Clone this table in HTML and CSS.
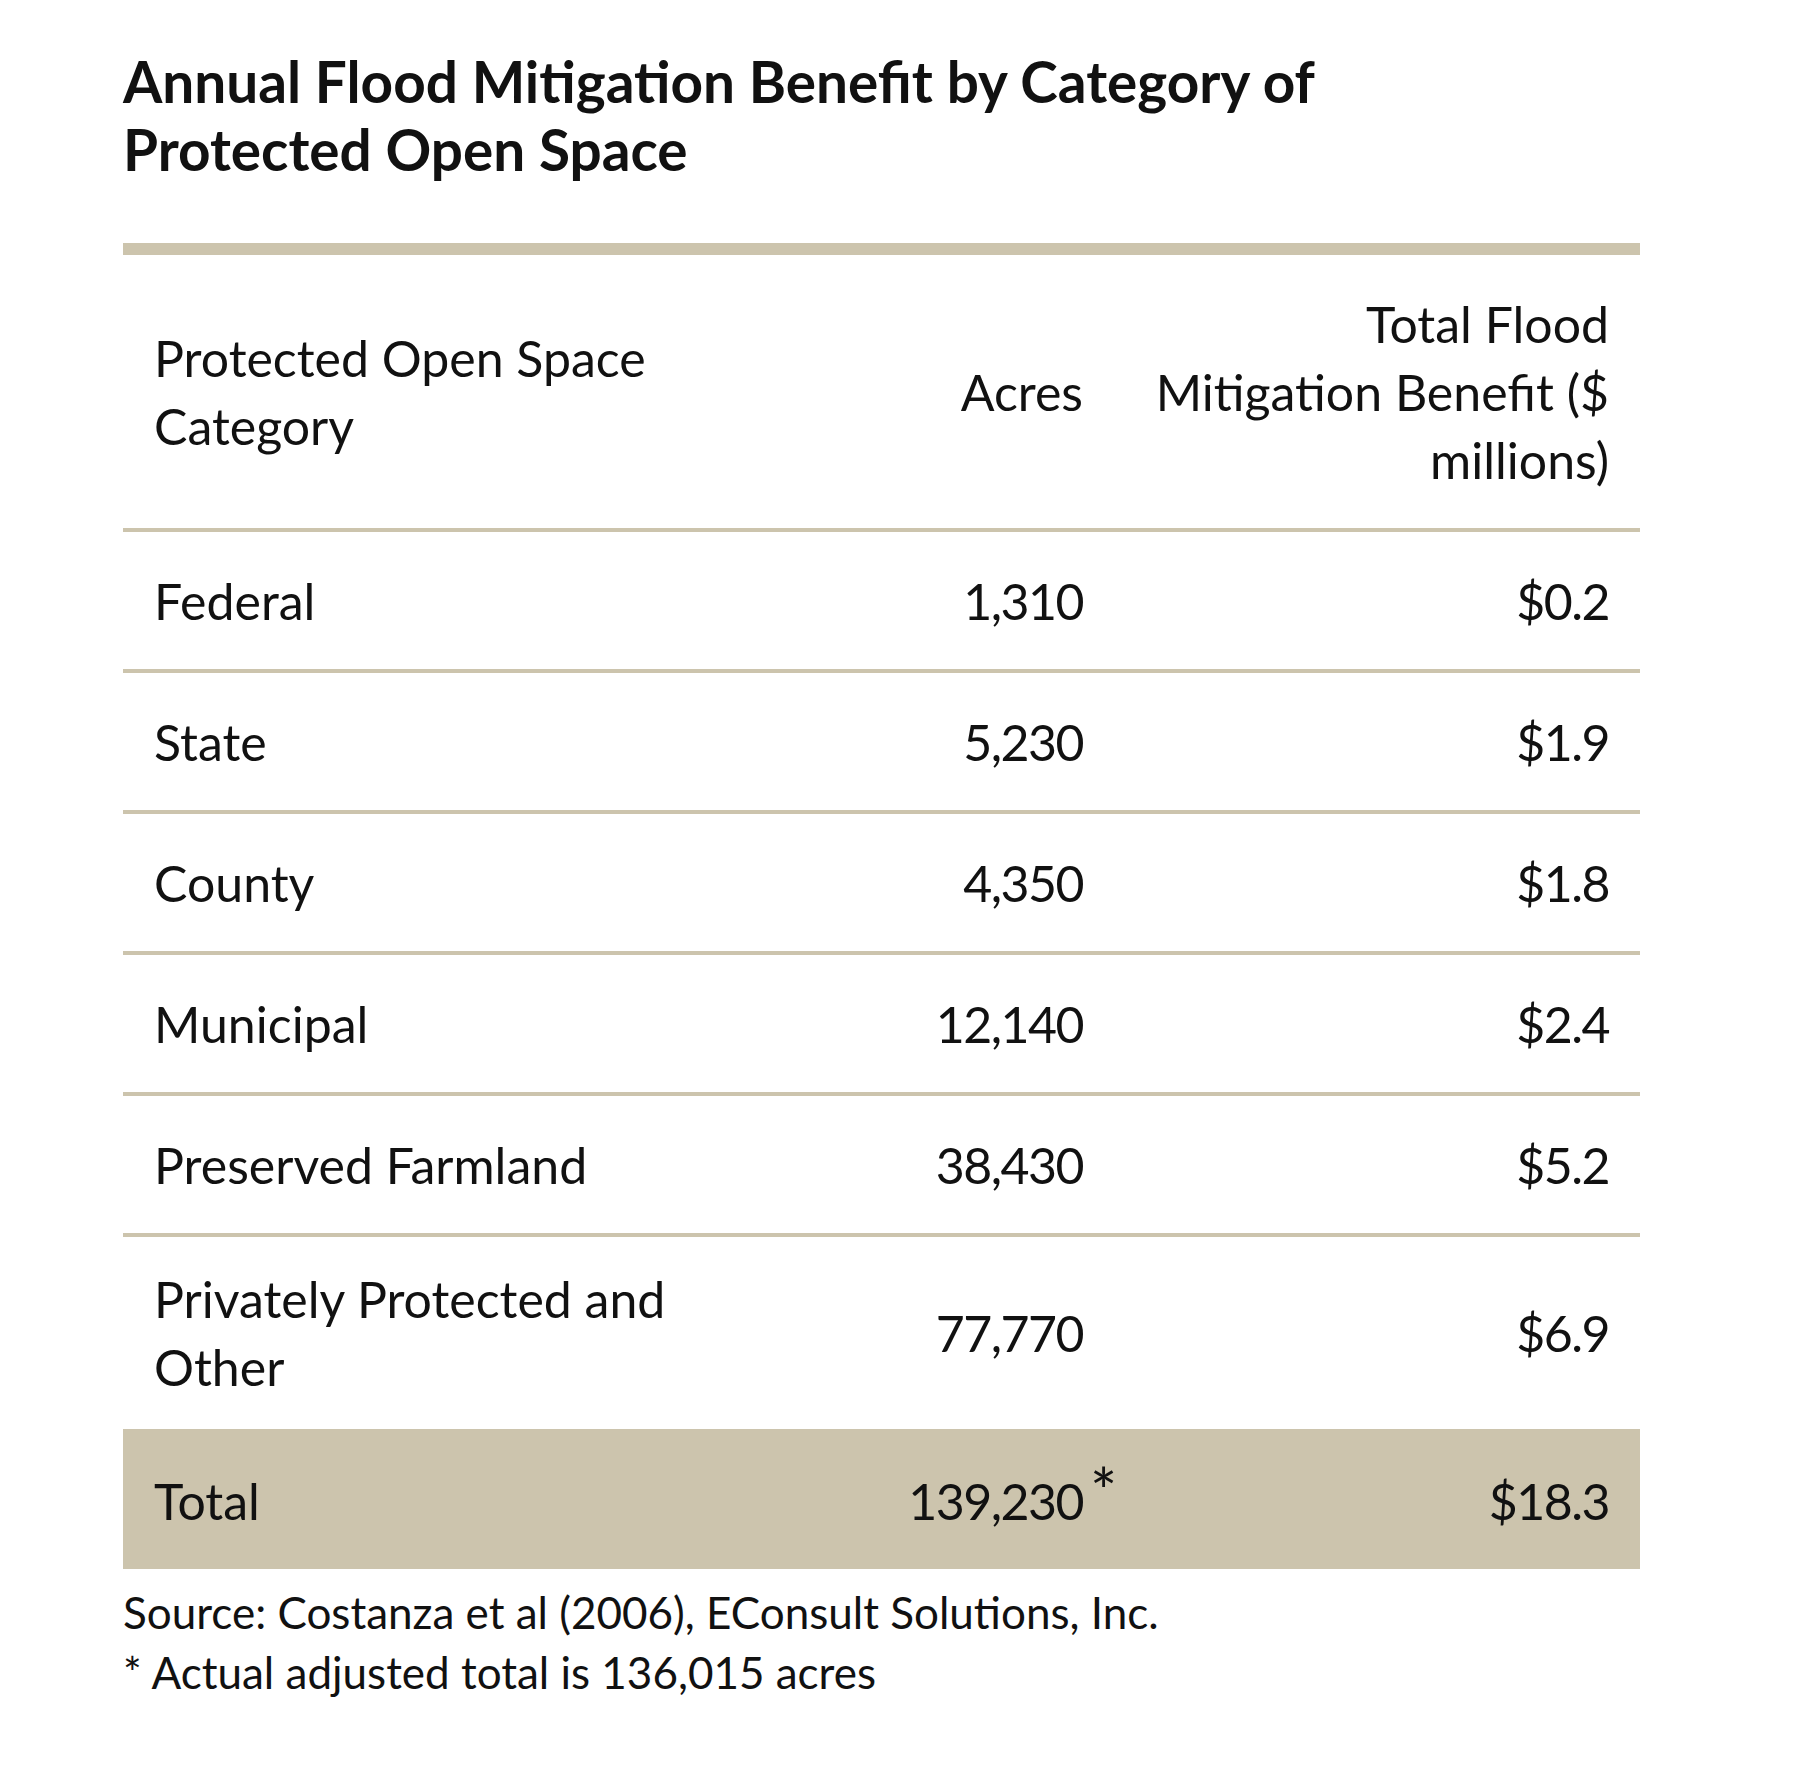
FILE: index.html
```html
<!DOCTYPE html>
<html lang="en">
<head>
<meta charset="utf-8">
<title>Annual Flood Mitigation Benefit by Category of Protected Open Space</title>
<link rel="stylesheet" href="styles.css">
</head>
<body>
<div class="page">
  <h1 class="title">Annual Flood Mitigation Benefit by Category of<br>Protected Open Space</h1>
  <div class="table">
    <div class="row head">
      <div class="c1">Protected Open Space<br>Category</div>
      <div class="c2">Acres</div>
      <div class="c3">Total Flood<br>Mitigation Benefit ($<br>millions)</div>
    </div>
    <div class="row">
      <div class="c1">Federal</div>
      <div class="c2">1,310</div>
      <div class="c3">$0.2</div>
    </div>
    <div class="row">
      <div class="c1">State</div>
      <div class="c2">5,230</div>
      <div class="c3">$1.9</div>
    </div>
    <div class="row">
      <div class="c1">County</div>
      <div class="c2">4,350</div>
      <div class="c3">$1.8</div>
    </div>
    <div class="row">
      <div class="c1">Municipal</div>
      <div class="c2">12,140</div>
      <div class="c3">$2.4</div>
    </div>
    <div class="row">
      <div class="c1">Preserved Farmland</div>
      <div class="c2">38,430</div>
      <div class="c3">$5.2</div>
    </div>
    <div class="row last">
      <div class="c1">Privately Protected and<br>Other</div>
      <div class="c2">77,770</div>
      <div class="c3">$6.9</div>
    </div>
    <div class="row total">
      <div class="c1">Total</div>
      <div class="c2"><span class="num">139,230<span class="star">*</span></span></div>
      <div class="c3">$18.3</div>
    </div>
  </div>
  <div class="notes">
    <p>Source: Costanza et al (2006), EConsult Solutions, Inc.</p>
    <p class="foot">* Actual adjusted total is 136,015 acres</p>
  </div>
</div>
</body>
</html>
```
FILE: styles.css
```css
html, body {
  margin: 0;
  background: #ffffff;
}
body {
  color: #111111;
  font-family: Lato, "Open Sans", sans-serif;
}
.page {
  padding: 47px 0 40px 123px;
  width: 1517px;
}
.title {
  margin: 0;
  font-size: 56.7px;
  font-weight: 700;
  line-height: 68px;
}
.table {
  margin-top: 60px;
  border-top: 12px solid #ccc4ad;
}
.row {
  display: grid;
  grid-template-columns: 699px 261px 557px;
  align-items: center;
  box-sizing: border-box;
  min-height: 141px;
  padding: 28px 0;
  border-bottom: 4px solid #ccc4ad;
  font-size: 50px;
  line-height: 68px;
  white-space: nowrap;
}
.row.head {
  padding: 35px 0 34px;
}
.row.last {
  border-bottom: none;
}
.row.total {
  min-height: 140px;
  padding: 30px 0 26px;
  border-bottom: none;
  background: #ccc4ad;
}
.c1 {
  padding-left: 31px;
}
.c2 {
  text-align: right;
}
.c3 {
  text-align: right;
  padding-right: 31px;
}
.row:not(.head) .c2,
.row:not(.head) .c3 {
  letter-spacing: -1.5px;
}
.num {
  position: relative;
}
.star {
  position: absolute;
  left: 100%;
  top: -12px;
  margin-left: 7px;
  font-size: 64px;
  line-height: 64px;
  letter-spacing: 0;
}
.notes {
  margin-top: 13px;
  margin-left: 0;
  font-size: 44px;
  line-height: 60px;
}
.notes p {
  margin: 0;
}
```
